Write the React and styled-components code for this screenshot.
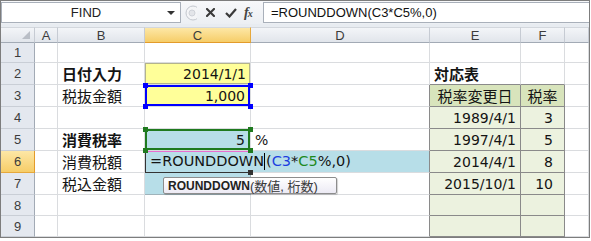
import React from 'react';
import styled, { createGlobalStyle } from 'styled-components';

const GRID = '#dadcdf';
const TB = '#8a8a8a';
const YEL = '#ffff99';
const BLUE = '#b7dee8';
const THEAD = '#d8e4bc';
const TBODY = '#ecf2df';

const Global = createGlobalStyle`
  html, body { margin: 0; padding: 0; background: #fff; }
  body { font-family: "Liberation Sans", Arial, sans-serif; }
`;

const Frame = styled.div`
  width: 590px;
  height: 238px;
  box-sizing: border-box;
  border: 1px solid #7d7d7d;
  background: #e8ecf1;
  display: flex;
  flex-direction: column;
  overflow: hidden;
`;

const FormulaBar = styled.div`
  height: 23px;
  flex: none;
  display: flex;
  align-items: stretch;
  padding: 1px 0 1px;
  box-sizing: border-box;
  background: linear-gradient(#f7f8fa, #eceff3);
  margin-bottom: 3px;
`;

const NameBox = styled.div`
  width: 180px;
  box-sizing: border-box;
  background: #fff;
  border: 1px solid #a9b0ba;
  display: flex;
  align-items: center;
  font: 13px "Liberation Sans", Arial, sans-serif;
  color: #222;
`;

const NameText = styled.span`
  flex: 1;
  text-align: center;
  padding-left: 3px;
`;

const DropArrow = styled.span`
  width: 0;
  height: 0;
  border-left: 4px solid transparent;
  border-right: 4px solid transparent;
  border-top: 4px solid #333;
  margin-right: 5px;
`;

const Controls = styled.div`
  width: 82px;
  box-sizing: border-box;
  display: flex;
  align-items: center;
  padding-left: 4px;
`;

const IconBox = styled.span`
  display: inline-flex;
  margin-left: ${p => p.$ml || 0}px;
`;

const Fx = styled.span`
  margin-left: 7px;
  font: italic bold 14px "Liberation Serif", "DejaVu Serif", serif;
  color: #444;
  letter-spacing: -1px;
  & small { font-size: 10px; }
`;

const FormulaInput = styled.div`
  flex: 1;
  background: #fff;
  border: 1px solid #a9b0ba;
  border-right: none;
  display: flex;
  align-items: center;
  padding-left: 7px;
  font: 13px "Liberation Sans", Arial, sans-serif;
  color: #111;
`;

const Sheet = styled.div`
  flex: 1;
  display: grid;
  grid-template-columns: 34px 23px 87px 106px 179px 91px 44px 1fr;
  grid-template-rows: 16px 20px 22px 22px 22px 22px 22px 22px 21px 21px;
  background: #fff;
  position: relative;
`;

const headBg = a => a
  ? 'linear-gradient(#fde7a6, #f6cd68)'
  : 'linear-gradient(#f3f5f8, #e1e5eb)';

const ColHead = styled.div`
  box-sizing: border-box;
  background: ${p => headBg(p.$active)};
  border-top: 1px solid #d3d7dd;
  border-right: 1px solid ${p => p.$active ? '#e6a83c' : '#c6cbd3'};
  border-bottom: 1px solid ${p => p.$active ? '#e39b2a' : '#a2aab5'};
  display: flex;
  align-items: center;
  justify-content: center;
  font: 13px "Liberation Sans", Arial, sans-serif;
  color: #3c3c3c;
  line-height: 1;
`;

const Corner = styled(ColHead)`
  justify-content: flex-end;
  align-items: flex-end;
  padding: 0 4px 3px 0;
  &::after {
    content: '';
    width: 0;
    height: 0;
    border-left: 8px solid transparent;
    border-bottom: 8px solid #b9bec6;
  }
`;

const RowHead = styled.div`
  box-sizing: border-box;
  background: ${p => p.$active ? 'linear-gradient(#fde7a6, #f6cd68)' : '#e4e8ef'};
  border-right: 1px solid ${p => p.$active ? '#e39b2a' : '#a2aab5'};
  border-bottom: 1px solid ${p => p.$active ? '#e6a83c' : '#c9ced6'};
  display: flex;
  align-items: center;
  justify-content: center;
  font: 13px "Liberation Sans", Arial, sans-serif;
  color: #3c3c3c;
  line-height: 1;
`;

const Cell = styled.div`
  box-sizing: border-box;
  position: relative;
  border-right: 1px solid ${p => p.$br || GRID};
  border-bottom: 1px solid ${p => p.$bb || GRID};
  background: ${p => p.$bg || '#fff'};
  display: flex;
  align-items: center;
  justify-content: ${p => p.$align === 'right' ? 'flex-end' : p.$align === 'center' ? 'center' : 'flex-start'};
  padding: ${p => p.$pad || '0 4px'};
  font-family: ${p => p.$num ? '"DejaVu Sans", Verdana, sans-serif' : '"Noto Sans CJK JP", "Noto Sans", sans-serif'};
  font-size: ${p => p.$num ? '14px' : '15px'};
  font-weight: ${p => p.$bold ? 700 : 400};
  color: #141414;
  white-space: nowrap;
  line-height: 1;
  box-shadow: ${p => p.$ring ? `inset 0 0 0 ${p.$ringW || 1}px ${p.$ring}` : 'none'};
`;

const Handle = styled.span`
  position: absolute;
  width: 5px;
  height: 5px;
  background: ${p => p.$c};
  ${p => p.$top ? 'top: -2px;' : 'bottom: -3px;'}
  ${p => p.$left ? 'left: -2px;' : 'right: -3px;'}
  z-index: 2;
`;

const Handles = ({ c }) => (
  <>
    <Handle $c={c} $top $left />
    <Handle $c={c} $top />
    <Handle $c={c} $left />
    <Handle $c={c} />
  </>
);

const EditCell = styled(Cell)`
  grid-column: span 2;
  border-left: 1px solid #333;
  padding-left: 4px;
  font-size: 14.5px;
  &::before {
    content: '';
    position: absolute;
    left: -1px;
    top: 0;
    width: 107px;
    height: 1px;
    background: #e86fd0;
  }
  &::after {
    content: '';
    position: absolute;
    left: -1px;
    bottom: -1px;
    width: 105px;
    height: 1px;
    background: #333;
  }
`;

const FillHandle = styled.span`
  position: absolute;
  left: 102px;
  bottom: -3px;
  width: 5px;
  height: 5px;
  background: #333;
  z-index: 2;
`;

const Ref = styled.span`
  color: ${p => p.$c};
`;

const Caret = styled.span`
  display: inline-block;
  width: 1px;
  height: 17px;
  background: #000;
  margin: 0 1px 0 0;
  vertical-align: middle;
`;

const Tip = styled.div`
  position: absolute;
  left: 162px;
  top: 150px;
  width: 174px;
  height: 17px;
  box-sizing: border-box;
  padding: 0 4px;
  border: 1px solid #8d8d8d;
  border-radius: 2px;
  background: linear-gradient(#ffffff, #eceaf4);
  box-shadow: 1px 1px 1px rgba(0, 0, 0, 0.18);
  display: flex;
  align-items: center;
  white-space: nowrap;
  color: #3a3a3a;
  line-height: 1;
  z-index: 3;
`;

const TipName = styled.b`
  font: bold 12px "Liberation Sans", Arial, sans-serif;
  color: #222;
`;

const TipArgs = styled.span`
  font: 13px "Liberation Sans", "Noto Sans CJK JP", sans-serif;
`;

const Grip = () => (
  <svg width="12" height="16" viewBox="0 0 12 16">
    <circle cx="8" cy="8" r="7" fill="#f4f5f7" stroke="#c3c7ce" />
    <circle cx="7" cy="8" r="3" fill="#e3e5e9" stroke="#cfd2d8" />
  </svg>
);

const XIcon = () => (
  <svg width="9" height="9" viewBox="0 0 9 9">
    <path d="M1 1 L8 8 M8 1 L1 8" stroke="#3a3a3a" strokeWidth="2.1" strokeLinecap="square" />
  </svg>
);

const CheckIcon = () => (
  <svg width="12" height="10" viewBox="0 0 12 10">
    <path d="M1 5 L4.5 8.5 L11 1" stroke="#3a3a3a" strokeWidth="2.2" fill="none" />
  </svg>
);

const Blank = ({ n = 1, ...rest }) => Array.from({ length: n }, (_, i) => <Cell key={i} {...rest} />);

export default function App() {
  const cols = ['A', 'B', 'C', 'D', 'E', 'F', ''];
  return (
    <>
      <Global />
      <Frame>
        <FormulaBar>
          <NameBox>
            <NameText>FIND</NameText>
            <DropArrow />
          </NameBox>
          <Controls>
            <IconBox><Grip /></IconBox>
            <IconBox $ml={9}><XIcon /></IconBox>
            <IconBox $ml={10}><CheckIcon /></IconBox>
            <Fx>f<small>x</small></Fx>
          </Controls>
          <FormulaInput>=ROUNDDOWN(C3*C5%,0)</FormulaInput>
        </FormulaBar>

        <Sheet>
          <Corner />
          {cols.map((c, i) => (
            <ColHead key={i} $active={c === 'C'}>{c}</ColHead>
          ))}

          {/* Row 1 */}
          <RowHead>1</RowHead>
          <Blank n={7} />

          {/* Row 2 */}
          <RowHead>2</RowHead>
          <Cell />
          <Cell $bold>日付入力</Cell>
          <Cell $num $align="right" $bg={YEL} $ring="#b3b38c">2014/1/1</Cell>
          <Cell />
          <Cell $bold $bb={TB}>対応表</Cell>
          <Cell $bb={TB} />
          <Cell />

          {/* Row 3 */}
          <RowHead>3</RowHead>
          <Cell />
          <Cell>税抜金額</Cell>
          <Cell $num $align="right" $bg={YEL} $ring="#0000ff" $ringW={2} $pad="0 5px">
            1,000
            <Handles c="#0000ff" />
          </Cell>
          <Cell $br={TB} />
          <Cell $align="center" $bg={THEAD} $br={TB} $bb={TB}>税率変更日</Cell>
          <Cell $align="center" $bg={THEAD} $br={TB} $bb={TB}>税率</Cell>
          <Cell />

          {/* Row 4 */}
          <RowHead>4</RowHead>
          <Cell />
          <Cell />
          <Cell />
          <Cell $br={TB} />
          <Cell $num $align="right" $bg={TBODY} $br={TB} $bb={TB}>1989/4/1</Cell>
          <Cell $num $align="right" $bg={TBODY} $br={TB} $bb={TB} $pad="0 11px 0 4px">3</Cell>
          <Cell />

          {/* Row 5 */}
          <RowHead>5</RowHead>
          <Cell />
          <Cell $bold>消費税率</Cell>
          <Cell $num $align="right" $bg={BLUE} $ring="#1f7a1f" $ringW={2} $pad="0 5px">
            5
            <Handles c="#1f7a1f" />
          </Cell>
          <Cell $num $br={TB}>%</Cell>
          <Cell $num $align="right" $bg={TBODY} $br={TB} $bb={TB}>1997/4/1</Cell>
          <Cell $num $align="right" $bg={TBODY} $br={TB} $bb={TB} $pad="0 11px 0 4px">5</Cell>
          <Cell />

          {/* Row 6 */}
          <RowHead $active>6</RowHead>
          <Cell />
          <Cell>消費税額</Cell>
          <EditCell $num $bg={BLUE} $br={TB}>
            =ROUNDDOWN<Caret />(<Ref $c="#1d3fe0">C3</Ref>*<Ref $c="#1e8a1e">C5</Ref>%,0)
            <FillHandle />
          </EditCell>
          <Cell $num $align="right" $bg={TBODY} $br={TB} $bb={TB}>2014/4/1</Cell>
          <Cell $num $align="right" $bg={TBODY} $br={TB} $bb={TB} $pad="0 11px 0 4px">8</Cell>
          <Cell />

          {/* Row 7 */}
          <RowHead>7</RowHead>
          <Cell />
          <Cell>税込金額</Cell>
          <Cell $bg={BLUE} $br="#9fb3ba" $bb="#9fb3ba" />
          <Cell $br={TB} />
          <Cell $num $align="right" $bg={TBODY} $br={TB} $bb={TB}>2015/10/1</Cell>
          <Cell $num $align="right" $bg={TBODY} $br={TB} $bb={TB} $pad="0 11px 0 4px">10</Cell>
          <Cell />

          {/* Row 8 */}
          <RowHead>8</RowHead>
          <Blank n={3} />
          <Cell $br={TB} />
          <Cell $bg={TBODY} $br={TB} $bb={TB} />
          <Cell $bg={TBODY} $br={TB} $bb={TB} />
          <Cell />

          {/* Row 9 */}
          <RowHead>9</RowHead>
          <Blank n={3} />
          <Cell $br={TB} />
          <Cell $bg={TBODY} $br={TB} $bb={TB} />
          <Cell $bg={TBODY} $br={TB} $bb={TB} />
          <Cell />

          <Tip>
            <TipName>ROUNDDOWN</TipName>
            <TipArgs>(数値, 桁数)</TipArgs>
          </Tip>
        </Sheet>
      </Frame>
    </>
  );
}
